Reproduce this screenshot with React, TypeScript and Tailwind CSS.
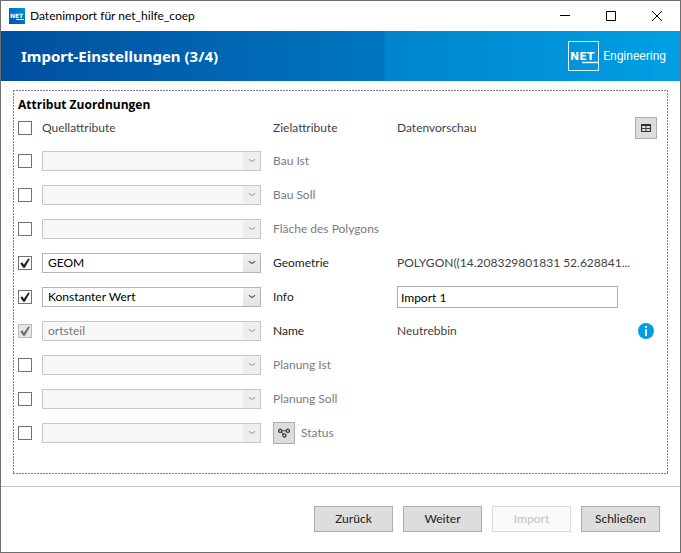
import React, { useState } from 'react';

interface AttributeRow {
    id: string;
    target: string;
    source?: string;
    checked?: boolean;
    locked?: boolean;
    preview?: string;
    constant?: string;
    info?: boolean;
    mapping?: boolean;
}

const rows: AttributeRow[] = [
    { id: 'bau-ist', target: 'Bau Ist' },
    { id: 'bau-soll', target: 'Bau Soll' },
    { id: 'flaeche', target: 'Fläche des Polygons' },
    {
        id: 'geometrie',
        target: 'Geometrie',
        source: 'GEOM',
        checked: true,
        preview: 'POLYGON((14.208329801831 52.628841...',
    },
    { id: 'info', target: 'Info', source: 'Konstanter Wert', checked: true, constant: 'Import 1' },
    { id: 'name', target: 'Name', source: 'ortsteil', checked: true, locked: true, preview: 'Neutrebbin', info: true },
    { id: 'planung-ist', target: 'Planung Ist' },
    { id: 'planung-soll', target: 'Planung Soll' },
    { id: 'status', target: 'Status', mapping: true },
];

const AppIcon = () => (
    <svg className="w-4 h-4" viewBox="0 0 16 16" aria-hidden="true">
        <defs>
            <linearGradient id="app-icon" x1="0" y1="1" x2="1" y2="0">
                <stop offset="0" stopColor="#00529f" />
                <stop offset="1" stopColor="#0095dd" />
            </linearGradient>
        </defs>
        <rect width="16" height="16" fill="url(#app-icon)" />
        <text x="1" y="10" fontSize="6" fontWeight="700" fontFamily="DejaVu Sans, sans-serif" fill="#fff">
            NET
        </text>
        <path d="M7 11.5h8" stroke="#fff" strokeWidth="1" />
    </svg>
);

const Logo = () => (
    <div className="flex items-center gap-1">
        <svg className="w-[31px] h-[30px]" viewBox="0 0 31 30" role="img" aria-label="NET">
            <rect x="0.5" y="0.5" width="30" height="29" fill="none" stroke="#e4f4fc" />
            <text x="2" y="19" fontSize="11" fontWeight="700" fontFamily="DejaVu Sans, sans-serif" fill="#fff">
                NET
            </text>
            <path d="M14 21.5h16" stroke="#fff" strokeWidth="1.4" />
        </svg>
        <span className="font-[Roboto,sans-serif] text-[12px]">Engineering</span>
    </div>
);

const Chevron = () => (
    <svg className="w-2 h-2" viewBox="0 0 8 8" fill="none" stroke="currentColor" strokeWidth="1.2">
        <path d="M0.8 2.2 4 4.4 7.2 2.2" />
    </svg>
);

const TableIcon = () => (
    <svg className="w-[10px] h-2" viewBox="0 0 10 8" fill="none" stroke="#2b303a">
        <rect x="0.5" y="0.5" width="9" height="7" rx="0.5" strokeWidth="1.2" />
        <path d="M0.5 1.2h9" strokeWidth="1.6" />
        <path d="M0.5 4.5h9M5 1.5v6" strokeWidth="0.9" />
    </svg>
);

const NodesIcon = () => (
    <svg className="w-3 h-[10px]" viewBox="0 0 12 10" fill="none" stroke="#3a3f4a" strokeWidth="1.3">
        <circle cx="2.2" cy="2.8" r="1.6" />
        <circle cx="9.8" cy="2.8" r="1.6" />
        <circle cx="6.4" cy="7.4" r="1.6" />
        <path d="M3.8 2.8h4.4M3.4 4 5.4 6.3" strokeWidth="1.1" />
    </svg>
);

const InfoIcon = () => (
    <svg className="w-4 h-4" viewBox="0 0 16 16" role="img" aria-label="Information">
        <circle cx="8" cy="8" r="8" fill="#009ee3" />
        <rect x="7" y="3" width="2" height="2" fill="#fff" />
        <rect x="7" y="6" width="2" height="7" fill="#fff" />
    </svg>
);

interface CheckProps {
    label: string;
    checked: boolean;
    disabled?: boolean;
    onChange: (value: boolean) => void;
}

const Check: React.FC<CheckProps> = ({ label, checked, disabled, onChange }) => (
    <span className="grid w-[14px] h-[14px]">
        <input
            type="checkbox"
            aria-label={label}
            checked={checked}
            disabled={disabled}
            onChange={(e) => onChange(e.target.checked)}
            className="peer col-start-1 row-start-1 appearance-none w-[14px] h-[14px] border border-[#707070] bg-white disabled:border-[#bcbcbc] disabled:bg-[#e6e6e6]"
        />
        <svg
            className="col-start-1 row-start-1 w-[14px] h-[14px] pointer-events-none invisible peer-checked:visible text-[#212121] peer-disabled:text-[#707070]"
            viewBox="0 0 14 14"
            fill="currentColor"
        >
            <path d="M2.3 7.4 4.2 6.3l1.7 2.4L10.2 2.4l1.6.6L6.9 11.8H5.2z" />
        </svg>
    </span>
);

const IconButton: React.FC<{ label: string; children: React.ReactNode }> = ({ label, children }) => (
    <button
        type="button"
        aria-label={label}
        className="flex items-center justify-center shrink-0 w-[22px] h-[22px] border border-[#adadad] bg-[#dddddd]"
    >
        {children}
    </button>
);

const FooterButton: React.FC<{ children: string; disabled?: boolean }> = ({ children, disabled }) => (
    <button
        type="button"
        disabled={disabled}
        className="w-[79px] h-[26px] border border-[#adadad] bg-[#dddddd] font-medium text-[12px] text-[#2b2b2b] disabled:border-[#dcdcdc] disabled:bg-[#fafafa] disabled:text-[#c6c6c6]"
    >
        {children}
    </button>
);

const MappingRow: React.FC<{ row: AttributeRow }> = ({ row }) => {
    const [checked, setChecked] = useState(!!row.checked);
    const disabled = !checked || row.locked;

    return (
        <tr className="h-[34px]">
            <td className="p-0">
                <Check label={row.target} checked={checked} disabled={row.locked} onChange={setChecked} />
            </td>
            <td className="p-0">
                <div className="relative w-[219px]">
                    <select
                        aria-label={`Quellattribut für ${row.target}`}
                        defaultValue={row.source ?? ''}
                        disabled={disabled}
                        className="block appearance-none w-full h-5 pl-[5px] border border-[#b3b3b9] bg-white text-[12px] leading-[18px] text-black disabled:border-[#c8c8c8] disabled:bg-[#f7f7f7] disabled:text-[#777777] disabled:opacity-100"
                    >
                        <option>{row.source ?? ''}</option>
                    </select>
                    <span
                        className={
                            disabled
                                ? 'absolute right-px inset-y-px w-[17px] flex items-center justify-center bg-[#eeeeee] text-[#b0b0b0] pointer-events-none'
                                : 'absolute right-px inset-y-px w-[17px] flex items-center justify-center bg-linear-to-b from-[#f0f0f0] to-[#e4e4e4] text-[#606060] pointer-events-none'
                        }
                    >
                        <Chevron />
                    </span>
                </div>
            </td>
            <td className="p-0">
                <div className={checked ? 'flex items-center gap-[6px] text-[#1e1e1e]' : 'flex items-center gap-[6px] text-[#7b7b7b]'}>
                    {row.mapping && (
                        <IconButton label="Werte zuordnen">
                            <NodesIcon />
                        </IconButton>
                    )}
                    {row.target}
                </div>
            </td>
            <td className="p-0">
                {row.constant !== undefined ? (
                    <input
                        type="text"
                        aria-label={`Wert für ${row.target}`}
                        defaultValue={row.constant}
                        className="block w-full h-[22px] px-[3px] border border-[#abadb3] bg-white text-[12px] text-black"
                    />
                ) : (
                    <div className="whitespace-nowrap">{row.preview}</div>
                )}
            </td>
            <td className="p-0">
                {row.info && (
                    <div className="flex justify-end pr-[9px]">
                        <InfoIcon />
                    </div>
                )}
            </td>
        </tr>
    );
};

export default function App() {
    const [all, setAll] = useState(false);

    return (
        <div className="min-h-screen flex flex-col border border-[#6e6e6e] bg-white font-['Lato','Open_Sans',sans-serif] text-[12px] leading-4 text-[#3f3f46]">
            {/* Title bar */}
            <header className="flex items-center h-[30px] pl-2 text-black">
                <AppIcon />
                <span className="ml-[5px] flex-1">Datenimport für net_hilfe_coep</span>
                <button type="button" aria-label="Minimieren" className="w-[46px] h-full flex items-center justify-center">
                    <svg className="w-[10px] h-[10px]" viewBox="0 0 10 10" stroke="currentColor">
                        <path d="M0 4.5h10" />
                    </svg>
                </button>
                <button type="button" aria-label="Maximieren" className="w-[46px] h-full flex items-center justify-center">
                    <svg className="w-[10px] h-[10px]" viewBox="0 0 10 10" stroke="currentColor" fill="none">
                        <path d="M0.5 0.5h9v9h-9z" />
                    </svg>
                </button>
                <button type="button" aria-label="Fenster schließen" className="w-[46px] h-full flex items-center justify-center">
                    <svg className="w-[10px] h-[10px]" viewBox="0 0 10 10" stroke="currentColor">
                        <path d="M0 0l10 10M10 0 0 10" />
                    </svg>
                </button>
            </header>

            {/* Banner */}
            <div className="flex items-center justify-between h-[50px] pl-5 pr-[14px] bg-[linear-gradient(90deg,#004f9f_0%,#0076c0_56.5%,#0084cd_56.5%,#009fe3_100%)] text-white">
                <h1 className="font-['Noto_Sans',sans-serif] text-[15px] font-bold">Import-Einstellungen (3/4)</h1>
                <Logo />
            </div>

            {/* Mapping area */}
            <main className="flex-1 flex p-3 pt-[9px]">
                <section className="flex-1 px-[5px] pt-[9px] [background:repeating-linear-gradient(90deg,#808080_0_2px,transparent_2px_3px)_top/100%_1px_no-repeat,repeating-linear-gradient(90deg,#808080_0_2px,transparent_2px_3px)_bottom/100%_1px_no-repeat,repeating-linear-gradient(#808080_0_2px,transparent_2px_3px)_left/1px_100%_no-repeat,repeating-linear-gradient(#808080_0_2px,transparent_2px_3px)_right/1px_100%_no-repeat]">
                    <h2 className="font-['Open_Sans',sans-serif] font-bold leading-3 text-black">Attribut Zuordnungen</h2>
                    <table className="w-full table-fixed border-collapse">
                        <colgroup>
                            <col className="w-6" />
                            <col className="w-[231px]" />
                            <col className="w-[124px]" />
                            <col />
                            <col className="w-[45px]" />
                        </colgroup>
                        <thead>
                            <tr className="h-[33px] text-left">
                                <td className="p-0">
                                    <Check label="Alle auswählen" checked={all} onChange={setAll} />
                                </td>
                                <th className="p-0 font-normal">Quellattribute</th>
                                <th className="p-0 font-normal">Zielattribute</th>
                                <th className="p-0 font-normal">Datenvorschau</th>
                                <td className="p-0">
                                    <div className="flex justify-end pr-[6px]">
                                        <IconButton label="Datenvorschau öffnen">
                                            <TableIcon />
                                        </IconButton>
                                    </div>
                                </td>
                            </tr>
                        </thead>
                        <tbody>
                            {rows.map((row) => (
                                <MappingRow key={row.id} row={row} />
                            ))}
                        </tbody>
                    </table>
                </section>
            </main>

            {/* Actions */}
            <footer className="flex items-center justify-end gap-[10px] h-[66px] pr-5 pb-px border-t border-[#c4c4c4]">
                <FooterButton>Zurück</FooterButton>
                <FooterButton>Weiter</FooterButton>
                <FooterButton disabled>Import</FooterButton>
                <FooterButton>Schließen</FooterButton>
            </footer>
        </div>
    );
}
